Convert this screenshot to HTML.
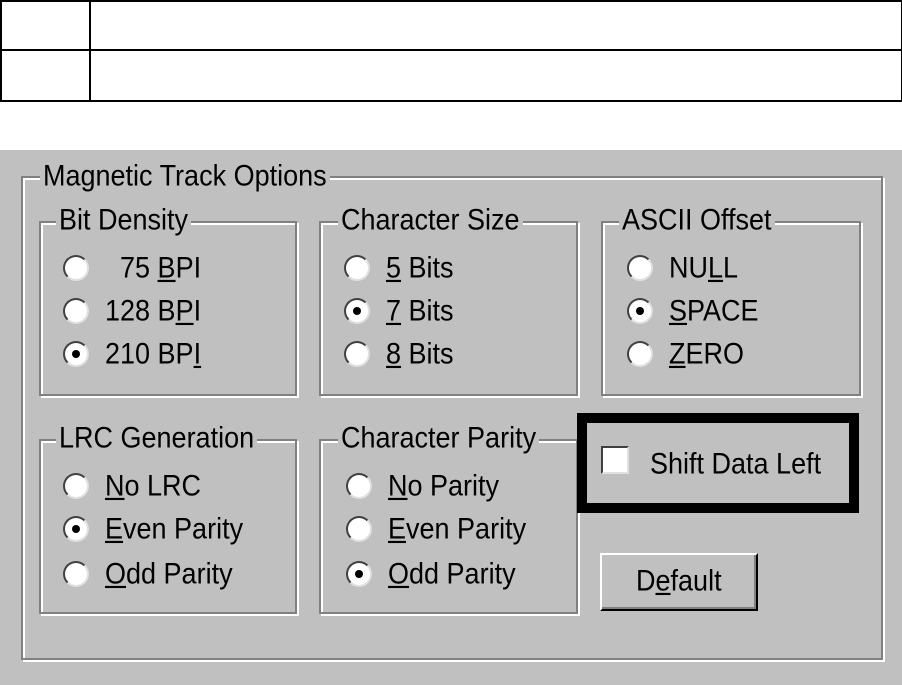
<!DOCTYPE html><html><head><style>
body{margin:0;width:902px;height:685px;background:#fff;position:relative;overflow:hidden;font-family:"Liberation Sans",sans-serif;color:#000}
.a{position:absolute}
.g{position:absolute;border:2px solid #808080;box-shadow:inset 2px 2px 0 #fff,2px 2px 0 #fff}
.t{position:absolute;background:#c0c0c0;padding:0 3px;font-size:27px;line-height:30px;white-space:nowrap;transform:scaleY(1.08)}
.r{position:absolute;font-size:27px;line-height:30px;white-space:nowrap}
.r span{display:inline-block;transform:scaleY(1.08)}
.r i{position:absolute;left:-42px;top:2px;width:22px;height:22px;border-radius:50%;background:#fff;border:2px solid;border-color:#404040 #e0e0e0 #e0e0e0 #404040}
.r i.on:after{content:"";position:absolute;left:7px;top:7px;width:8px;height:8px;border-radius:50%;background:#000}
u{text-decoration:underline}
</style></head><body>
<div class="a" style="left:0;top:0;width:899px;height:98px;border:2px solid #000"></div>
<div class="a" style="left:0;top:49px;width:902px;height:2px;background:#000"></div>
<div class="a" style="left:89px;top:0;width:2px;height:100px;background:#000"></div>
<div class="a" style="left:0;top:150px;width:902px;height:535px;background:#c0c0c0"></div>
<div class="g" style="left:21px;top:176px;width:858px;height:480px"></div>
<div class="t" style="left:40px;top:161px">Magnetic Track Options</div>

<div class="g" style="left:39px;top:221px;width:254px;height:171px"></div>
<div class="t" style="left:56px;top:205px">Bit Density</div>
<div class="r" style="left:105px;top:253px"><i></i><span>&nbsp; 75 <u>B</u>PI</span></div>
<div class="r" style="left:105px;top:296px"><i></i><span>128 B<u>P</u>I</span></div>
<div class="r" style="left:105px;top:339px"><i class="on"></i><span>210 BP<u>I</u></span></div>

<div class="g" style="left:319px;top:221px;width:255px;height:171px"></div>
<div class="t" style="left:338px;top:205px">Character Size</div>
<div class="r" style="left:386px;top:253px"><i></i><span><u>5</u> Bits</span></div>
<div class="r" style="left:386px;top:296px"><i class="on"></i><span><u>7</u> Bits</span></div>
<div class="r" style="left:386px;top:339px"><i></i><span><u>8</u> Bits</span></div>

<div class="g" style="left:601px;top:221px;width:256px;height:171px"></div>
<div class="t" style="left:619px;top:205px">ASCII Offset</div>
<div class="r" style="left:669px;top:253px"><i></i><span>NU<u>L</u>L</span></div>
<div class="r" style="left:669px;top:296px"><i class="on"></i><span><u>S</u>PACE</span></div>
<div class="r" style="left:669px;top:339px"><i></i><span><u>Z</u>ERO</span></div>

<div class="g" style="left:39px;top:439px;width:254px;height:171px"></div>
<div class="t" style="left:56px;top:423px">LRC Generation</div>
<div class="r" style="left:105px;top:471px"><i></i><span><u>N</u>o LRC</span></div>
<div class="r" style="left:105px;top:514px"><i class="on"></i><span><u>E</u>ven Parity</span></div>
<div class="r" style="left:105px;top:559px"><i></i><span><u>O</u>dd Parity</span></div>

<div class="g" style="left:319px;top:439px;width:255px;height:171px"></div>
<div class="t" style="left:338px;top:423px">Character Parity</div>
<div class="r" style="left:388px;top:471px"><i></i><span><u>N</u>o Parity</span></div>
<div class="r" style="left:388px;top:514px"><i></i><span><u>E</u>ven Parity</span></div>
<div class="r" style="left:388px;top:559px"><i class="on"></i><span><u>O</u>dd Parity</span></div>

<div class="a" style="left:577px;top:413px;width:262px;height:80px;border:10px solid #000"></div>
<div class="a" style="left:601px;top:446px;width:28px;height:28px;background:#fff;box-sizing:border-box;border:2px solid;border-color:#404040 #e0e0e0 #e0e0e0 #404040"></div>
<div class="r" style="left:650px;top:449px"><span>Shift Data Left</span></div>

<div class="a" style="left:600px;top:553px;width:158px;height:58px;box-sizing:border-box;background:#c0c0c0;border:2px solid;border-color:#fff #000 #000 #fff;box-shadow:inset -2px -2px 0 #808080"></div>
<div class="r" style="left:636px;top:566px"><span>D<u>e</u>fault</span></div>
</body></html>
